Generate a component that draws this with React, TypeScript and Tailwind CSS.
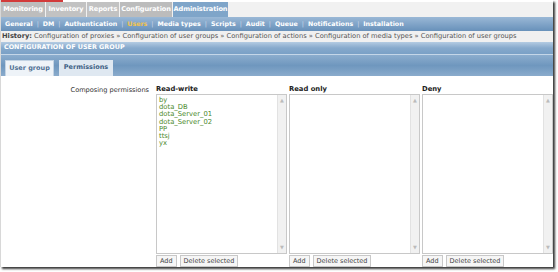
import React from "react";

const font = { fontFamily: '"DejaVu Sans", Verdana, sans-serif' };

function ListBox({ items }: { items: string[] }) {
  return (
    <div className="flex flex-col w-[131px]">
      <div className="flex h-[160px] border border-[#c8c8c8] bg-white">
        <div className="flex-1 pl-[2px] pt-[2px] flex flex-col text-[6.8px] leading-[7.2px] text-[#4b8a2a]">
          {items.map((i) => (
            <div key={i}>{i}</div>
          ))}
        </div>
        <div className="w-[9px] bg-[#f1f1f1] border-l border-[#e2e2e2] flex flex-col justify-between items-center py-[3px] text-[5px] leading-[5px] text-[#bbb]">
          <span>▲</span>
          <span>▼</span>
        </div>
      </div>
      <div className="flex gap-[3px] mt-[1px]">
        <div className="h-[12px] px-[3px] border border-[#c8c8c8] bg-[#f6f6f6] text-[6.5px] leading-[10px] text-[#444]">Add</div>
        <div className="h-[12px] px-[3px] border border-[#c8c8c8] bg-[#f6f6f6] text-[6.5px] leading-[10px] text-[#444]">Delete selected</div>
      </div>
    </div>
  );
}

export default function App() {
  const top = [
    { t: "Monitoring", w: "w-[45px]", bg: "bg-[#bdbdbd]" },
    { t: "Inventory", w: "w-[41px]", bg: "bg-[#c2c2c2]" },
    { t: "Reports", w: "w-[33px]", bg: "bg-[#c2c2c2]" },
    { t: "Configuration", w: "w-[53px]", bg: "bg-[#bcbcbc]" },
    { t: "Administration", w: "w-[56px]", bg: "bg-[#7fa5c9]" },
  ];
  const sub = ["General", "DM", "Authentication", "Users", "Media types", "Scripts", "Audit", "Queue", "Notifications", "Installation"];
  return (
    <div className="w-[558px] h-[272px] bg-white" style={font}>
      <div className="w-[553px] h-[267px] bg-white shadow-[2px_2px_2px_#3a3a3a] border-l border-[#d8d8d8] flex flex-col overflow-hidden">
        <div className="h-[2px] w-[62px] bg-[#d23a3a] shrink-0" />
        <div className="h-[15px] bg-[#f1f1f1] flex shrink-0">
          {top.map((x) => (
            <div key={x.t} className={`${x.w} ${x.bg} flex items-center justify-center text-white font-bold text-[6.6px] tracking-[-0.1px] border-r border-[#f1f1f1] whitespace-nowrap`}>
              {x.t}
            </div>
          ))}
        </div>
        <div className="h-[14px] bg-gradient-to-b from-[#9ab8d6] to-[#6891ba] flex items-center pl-[4px] shrink-0 text-[6.3px] font-bold text-white">
          {sub.map((s, i) => (
            <React.Fragment key={s}>
              {i > 0 && <span className="mx-[4px] text-[#c9d9ea] font-normal">|</span>}
              <span className={s === "Users" ? "text-[#f3c34a]" : ""}>{s}</span>
            </React.Fragment>
          ))}
        </div>
        <div className="h-[11px] bg-[#f0f0f0] flex items-center pl-[1px] shrink-0 text-[6.7px] text-[#555] whitespace-nowrap">
          <span className="font-bold text-[#444]">History:</span>
          <span className="ml-[2px]">
            Configuration of proxies » Configuration of user groups » Configuration of actions » Configuration of media types » Configuration of user groups
          </span>
        </div>
        <div className="h-[13px] bg-gradient-to-b from-[#b3cbe2] via-[#86a9cc] to-[#7aa0c6] flex items-center pl-[3px] shrink-0 text-[6.4px] font-bold text-white border-b border-[#c4d6e8]">
          CONFIGURATION OF USER GROUP
        </div>
        <div className="h-[21px] bg-gradient-to-b from-[#8cadce] via-[#6f97be] to-[#8aabcc] flex items-end pl-[4px] gap-[5px] shrink-0">
          <div className="w-[49px] h-[16px] bg-[#eef3f8] border border-[#c3d3e3] border-b-0 flex items-center justify-center text-[6.5px] font-bold text-[#4e6f93]">User group</div>
          <div className="w-[54px] h-[16px] bg-[#dfe8f1] flex items-center justify-center text-[6.5px] font-bold text-[#3e5f85]">Permissions</div>
        </div>
        <div className="flex-1 bg-white flex pt-[8px]">
          <div className="w-[150px] text-right text-[6.6px] text-[#333] pt-[2px] pr-[0px]">Composing permissions</div>
          <div className="flex ml-[7px] gap-[2px]">
            {[
              { h: "Read-write", items: ["by", "dota_DB", "dota_Server_01", "dota_Server_02", "PP", "ttsj", "yx"] },
              { h: "Read only", items: [] },
              { h: "Deny", items: [] },
            ].map((c) => (
              <div key={c.h} className="flex flex-col">
                <div className="h-[10px] text-[6.8px] font-bold text-[#222] leading-[10px]">{c.h}</div>
                <ListBox items={c.items} />
              </div>
            ))}
          </div>
        </div>
      </div>
    </div>
  );
}
